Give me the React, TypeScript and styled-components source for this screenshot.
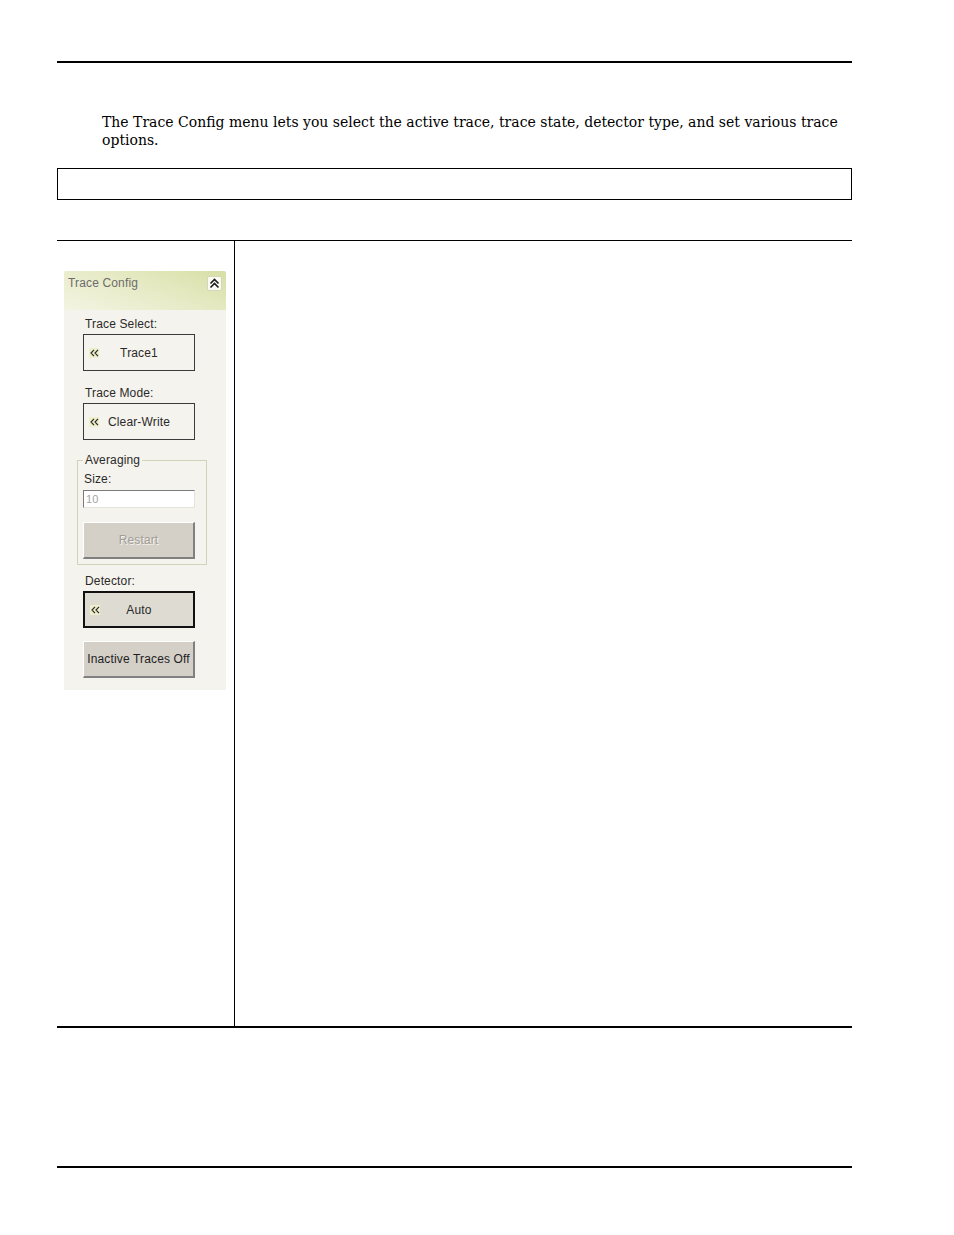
import React from "react";
import styled, { createGlobalStyle } from "styled-components";

const Global = createGlobalStyle`
  html, body { margin: 0; padding: 0; background: #ffffff; }
  body { font-family: "DejaVu Serif", "Liberation Serif", serif; color: #000; }
  * { box-sizing: border-box; }
`;

const Page = styled.div`
  width: 954px;
  height: 1235px;
  padding: 61px 102px 0 57px;
  display: flex;
  flex-direction: column;
`;

const Rule = styled.div<{ $top: number; $thick: number }>`
  width: 795px;
  height: ${(p) => p.$thick}px;
  background: #000;
  margin-top: ${(p) => p.$top}px;
`;

const Intro = styled.p`
  margin: 50px 0 0 45px;
  width: 745px;
  font-size: 14px;
  line-height: 18px;
`;

const NoteBox = styled.div`
  width: 795px;
  height: 32px;
  margin-top: 19px;
  border: 1px solid #000;
`;

const Table = styled.div`
  width: 795px;
  height: 788px;
  margin-top: 40px;
  border-top: 1px solid #000;
  border-bottom: 2px solid #000;
  display: grid;
  grid-template-columns: 178px 1fr;
`;

const LeftCell = styled.div`
  border-right: 1px solid #000;
  padding: 30px 0 0 7px;
`;

const RightCell = styled.div``;

const Panel = styled.div`
  width: 162px;
  height: 419px;
  background: #f5f3ed;
  font-family: "Liberation Sans", "DejaVu Sans", sans-serif;
  font-size: 12px;
  letter-spacing: 0.15px;
  color: #2a2a2a;
  display: flex;
  flex-direction: column;
`;

const Header = styled.div`
  height: 39px;
  border-top-left-radius: 3px;
  border-top-right-radius: 3px;
  background: linear-gradient(200deg, #d7dfa6 0%, #e6eac4 45%, #f3f4e2 100%);
  display: flex;
  justify-content: space-between;
  align-items: flex-start;
  padding: 5px 4px 0 4px;
`;

const HeaderTitle = styled.span`
  color: #6c6c6c;
  line-height: 14px;
`;

const CollapseBtn = styled.div`
  width: 15px;
  height: 15px;
  background: #fbfbf3;
  border: 1px solid #d3d8b8;
  border-radius: 2px;
  display: flex;
  align-items: center;
  justify-content: center;
`;

const Body = styled.div`
  display: flex;
  flex-direction: column;
  padding: 7px 0 0 19px;
`;

const Label = styled.div<{ $mt?: number }>`
  height: 14px;
  line-height: 14px;
  margin: ${(p) => p.$mt ?? 0}px 0 3px 2px;
`;

const SelectButton = styled.div<{ $bold?: boolean }>`
  width: 112px;
  height: 37px;
  border: ${(p) => (p.$bold ? "2px solid #111" : "1px solid #3a3a3a")};
  background: ${(p) => (p.$bold ? "#dedbd3" : "#f5f3ed")};
  display: grid;
  grid-template-columns: 22px 1fr 22px;
  align-items: center;
`;

const ArrowIcon = styled.span`
  width: 10px;
  height: 10px;
  margin-left: 5px;
  background: #f0efcc;
  display: flex;
  align-items: center;
  justify-content: center;
`;

const SelectText = styled.span`
  text-align: center;
  line-height: 14px;
  white-space: nowrap;
`;

const Group = styled.fieldset`
  width: 130px;
  margin: 13px 0 0 -6px;
  padding: 0 5px 5px 5px;
  border: 1px solid #d3d1b8;
  display: flex;
  flex-direction: column;
`;

const Legend = styled.legend`
  padding: 0 2px;
  margin-left: 0;
  line-height: 14px;
`;

const SizeLabel = styled.div`
  height: 14px;
  line-height: 14px;
  margin: 5px 0 4px 1px;
`;

const TextInput = styled.div`
  width: 112px;
  height: 18px;
  background: #fff;
  border-top: 1px solid #7b7b7b;
  border-left: 1px solid #7b7b7b;
  border-right: 1px solid #e4e3dc;
  border-bottom: 1px solid #e4e3dc;
  color: #a3a3a3;
  font-size: 11px;
  line-height: 16px;
  padding-left: 2px;
`;

const PushButton = styled.div<{ $disabled?: boolean; $mt: number }>`
  width: 112px;
  height: 37px;
  margin-top: ${(p) => p.$mt}px;
  background: #d4d0c8;
  border-top: 1px solid #ffffff;
  border-left: 1px solid #ffffff;
  border-right: 2px solid #808080;
  border-bottom: 2px solid #808080;
  display: flex;
  align-items: center;
  justify-content: center;
  color: ${(p) => (p.$disabled ? "#a29e96" : "#1e1e1e")};
  text-shadow: ${(p) => (p.$disabled ? "1px 1px 0 #f4f3f0" : "none")};
  white-space: nowrap;
`;

const Chevrons = () => (
  <svg width="11" height="11" viewBox="0 0 11 11">
    <path d="M1.5 5.5 L5.5 1.5 L9.5 5.5 M1.5 9.5 L5.5 5.5 L9.5 9.5" fill="none" stroke="#1a1a1a" strokeWidth="1.6" />
  </svg>
);

const LeftArrows = () => (
  <svg width="9" height="8" viewBox="0 0 9 8">
    <path d="M4 0.8 L1 4 L4 7.2 M8 0.8 L5 4 L8 7.2" fill="none" stroke="#2a2a2a" strokeWidth="1.2" />
  </svg>
);

const Select = ({ text, bold }: { text: string; bold?: boolean }) => (
  <SelectButton $bold={bold}>
    <ArrowIcon>
      <LeftArrows />
    </ArrowIcon>
    <SelectText>{text}</SelectText>
  </SelectButton>
);

export default function App() {
  return (
    <>
      <Global />
      <Page>
        <Rule $top={0} $thick={2} />
        <Intro>
          The Trace Config menu lets you select the active trace, trace state, detector type, and set various trace
          options.
        </Intro>
        <NoteBox />
        <Table>
          <LeftCell>
            <Panel>
              <Header>
                <HeaderTitle>Trace Config</HeaderTitle>
                <CollapseBtn>
                  <Chevrons />
                </CollapseBtn>
              </Header>
              <Body>
                <Label>Trace Select:</Label>
                <Select text="Trace1" />
                <Label $mt={15}>Trace Mode:</Label>
                <Select text="Clear-Write" />
                <Group>
                  <Legend>Averaging</Legend>
                  <SizeLabel>Size:</SizeLabel>
                  <TextInput>10</TextInput>
                  <PushButton $disabled $mt={14}>Restart</PushButton>
                </Group>
                <Label $mt={9}>Detector:</Label>
                <Select text="Auto" bold />
                <PushButton $mt={13}>Inactive Traces Off</PushButton>
              </Body>
            </Panel>
          </LeftCell>
          <RightCell />
        </Table>
        <Rule $top={138} $thick={2} />
      </Page>
    </>
  );
}
